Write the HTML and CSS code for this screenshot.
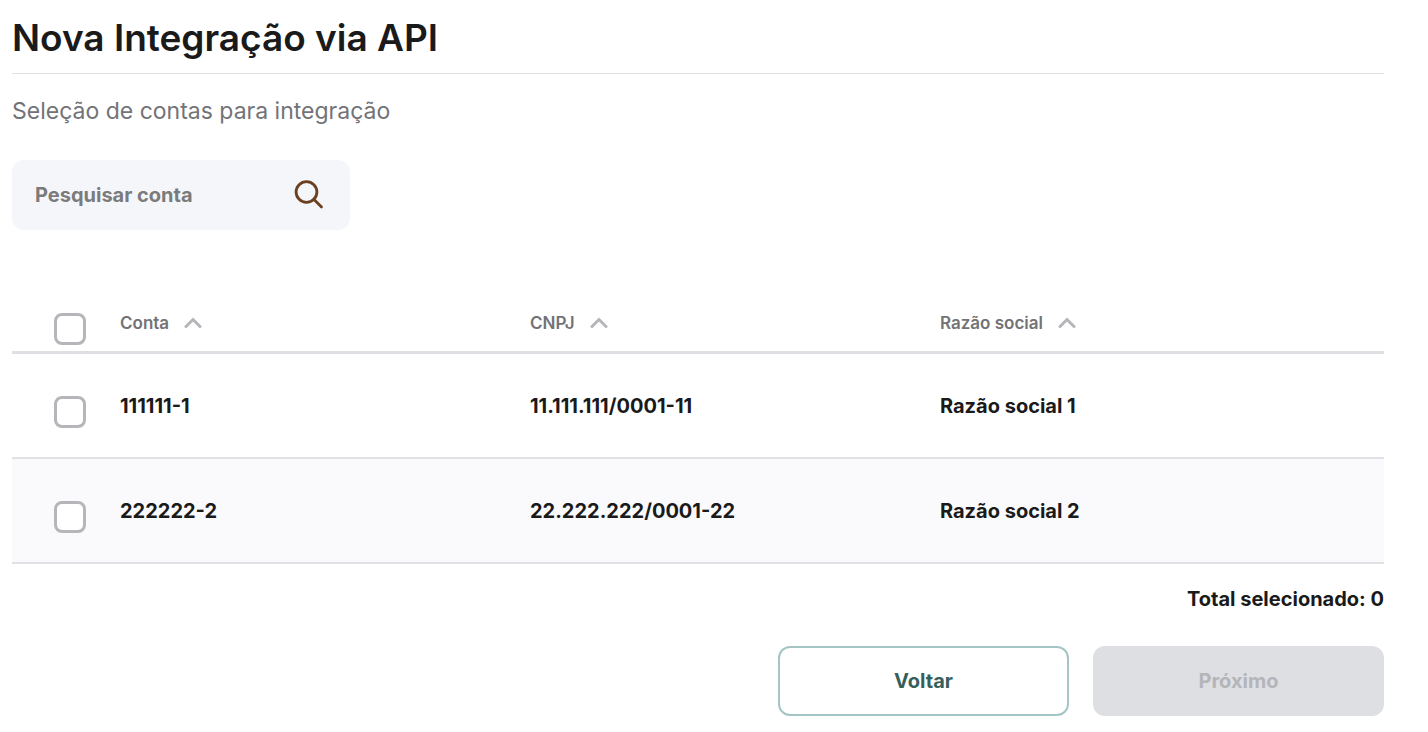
FILE: index.html
```html
<!DOCTYPE html>
<html lang="pt-BR">
<head>
  <meta charset="UTF-8">
  <meta name="viewport" content="width=device-width, initial-scale=1.0">
  <title>Nova Integração via API</title>
  <link rel="stylesheet" href="styles.css">
</head>
<body>
  <main class="page">
    <h1>Nova Integração via API</h1>
    <p class="subtitle">Seleção de contas para integração</p>

    <form class="search" role="search">
      <input type="search" placeholder="Pesquisar conta" aria-label="Pesquisar conta">
      <button type="submit" aria-label="Pesquisar">
        <svg viewBox="0 0 32 32" fill="none" stroke="currentColor" stroke-width="2.8" stroke-linecap="round">
          <circle cx="13.5" cy="13" r="10.4" />
          <path d="M20.8 20.3l7.7 7.7" />
        </svg>
      </button>
    </form>

    <table class="accounts">
      <colgroup>
        <col class="col-check">
        <col>
        <col>
        <col>
        <col class="col-end">
      </colgroup>
      <thead>
        <tr>
          <th class="check"><input type="checkbox" aria-label="Selecionar todas"></th>
          <th><button type="button" class="sort">Conta <svg viewBox="0 0 18 12"><path d="M2 9.5l7-7 7 7" /></svg></button></th>
          <th><button type="button" class="sort">CNPJ <svg viewBox="0 0 18 12"><path d="M2 9.5l7-7 7 7" /></svg></button></th>
          <th colspan="2"><button type="button" class="sort">Razão social <svg viewBox="0 0 18 12"><path d="M2 9.5l7-7 7 7" /></svg></button></th>
        </tr>
      </thead>
      <tbody>
        <tr>
          <td class="check"><input type="checkbox" aria-label="Selecionar conta 111111-1"></td>
          <td>111111-1</td>
          <td>11.111.111/0001-11</td>
          <td colspan="2">Razão social 1</td>
        </tr>
        <tr>
          <td class="check"><input type="checkbox" aria-label="Selecionar conta 222222-2"></td>
          <td>222222-2</td>
          <td>22.222.222/0001-22</td>
          <td colspan="2">Razão social 2</td>
        </tr>
      </tbody>
    </table>

    <p class="total">Total selecionado: 0</p>

    <div class="actions">
      <button type="button" class="btn btn-outline">Voltar</button>
      <button type="button" class="btn btn-primary" disabled>Próximo</button>
    </div>
  </main>
</body>
</html>
```
FILE: styles.css
```css
:root {
  --text: #1a1a1a;
  --muted: #737377;
  --border: #e2e2e6;
  --box: #b6b6ba;
  --green: #385e5b;
}

* {
  margin: 0;
  padding: 0;
  box-sizing: border-box;
}

body {
  font-family: Inter, sans-serif;
  font-size: 20px;
  color: var(--text);
  background: #fff;
}

button,
input {
  font: inherit;
}

.page {
  padding: 12px 44px 16px 12px;
}

h1 {
  font-size: 37px;
  font-weight: 600;
  line-height: 52px;
  padding-bottom: 9px;
  border-bottom: 1px solid var(--border);
}

.subtitle {
  margin-top: 20px;
  font-size: 23px;
  line-height: 34px;
  color: var(--muted);
}

.search {
  display: flex;
  align-items: center;
  width: 338px;
  height: 70px;
  margin-top: 32px;
  padding: 0 25px 0 23px;
  border-radius: 12px;
  background: #f5f6fa;
}

.search input {
  flex: 1;
  min-width: 0;
  border: 0;
  outline: 0;
  background: none;
  font-weight: 700;
}

.search input::placeholder {
  color: #7b7b7b;
  opacity: 1;
}

.search button {
  display: flex;
  border: 0;
  background: none;
  color: #6b4020;
  cursor: pointer;
}

.search svg {
  width: 32px;
  height: 32px;
}

.accounts {
  width: 100%;
  margin-top: 64px;
  border-spacing: 0;
  table-layout: fixed;
}

.col-check {
  width: 108px;
}

.col-end {
  width: 34px;
}

.accounts th,
.accounts td {
  text-align: left;
}

.accounts th {
  height: 60px;
  border-bottom: 3px solid #dfdfe3;
}

.accounts td {
  height: 105px;
  font-weight: 700;
  border-bottom: 2px solid var(--border);
}

.accounts tbody tr:nth-child(even) {
  background: #fafafc;
}

.accounts .check {
  padding: 12px 0 0 42px;
}

.check input {
  display: block;
  width: 32px;
  height: 32px;
  appearance: none;
  border: 3px solid var(--box);
  border-radius: 8px;
  background: #fff;
}

.check input:checked {
  background: var(--green);
}

.sort {
  display: flex;
  align-items: center;
  gap: 15px;
  border: 0;
  background: none;
  font-size: 17px;
  font-weight: 600;
  color: var(--muted);
  cursor: pointer;
}

.sort svg {
  width: 18px;
  height: 12px;
  fill: none;
  stroke: #b6b6ba;
  stroke-width: 3;
  stroke-linecap: round;
}

.total {
  margin-top: 19px;
  font-weight: 700;
  line-height: 32px;
  text-align: right;
}

.actions {
  display: flex;
  justify-content: flex-end;
  gap: 24px;
  margin-top: 31px;
}

.btn {
  width: 291px;
  height: 70px;
  border: 0;
  border-radius: 12px;
  font-weight: 700;
  cursor: pointer;
}

.btn-outline {
  border: 2px solid #a5c5c4;
  background: #fff;
  color: var(--green);
}

.btn-primary:disabled {
  background: #dedfe3;
  color: #b4b5b9;
  cursor: default;
}
```
